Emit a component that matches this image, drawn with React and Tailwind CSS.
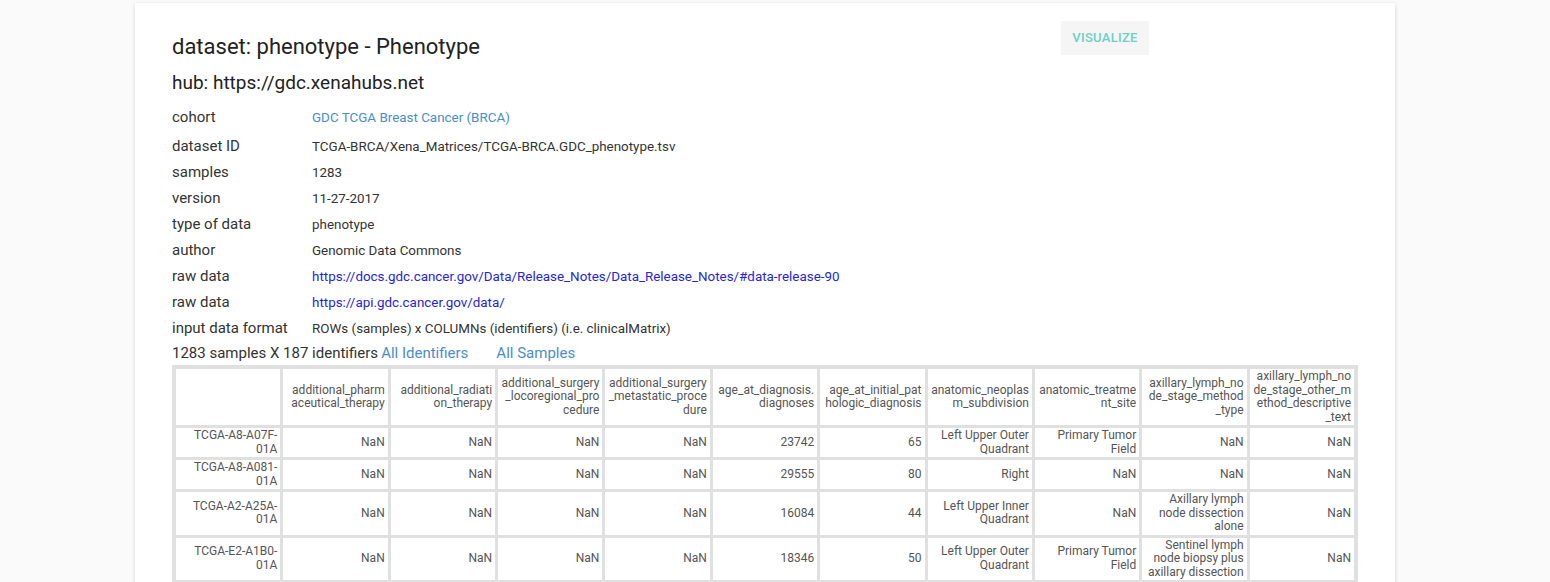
import React from 'react';

const meta = [
  { label: 'dataset ID', value: 'TCGA-BRCA/Xena_Matrices/TCGA-BRCA.GDC_phenotype.tsv' },
  { label: 'samples', value: '1283' },
  { label: 'version', value: '11-27-2017' },
  { label: 'type of data', value: 'phenotype' },
  { label: 'author', value: 'Genomic Data Commons' },
  { label: 'raw data', value: 'https://docs.gdc.cancer.gov/Data/Release_Notes/Data_Release_Notes/#data-release-90', link: true },
  { label: 'raw data', value: 'https://api.gdc.cancer.gov/data/', link: true },
  { label: 'input data format', value: 'ROWs (samples) x COLUMNs (identifiers) (i.e. clinicalMatrix)' },
];

const columns = [
  '',
  'additional_pharmaceutical_therapy',
  'additional_radiation_therapy',
  'additional_surgery_locoregional_procedure',
  'additional_surgery_metastatic_procedure',
  'age_at_diagnosis.diagnoses',
  'age_at_initial_pathologic_diagnosis',
  'anatomic_neoplasm_subdivision',
  'anatomic_treatment_site',
  'axillary_lymph_node_stage_method_type',
  'axillary_lymph_node_stage_other_method_descriptive_text',
];

const rows = [
  ['TCGA-A8-A07F-01A', 'NaN', 'NaN', 'NaN', 'NaN', '23742', '65', 'Left Upper Outer Quadrant', 'Primary Tumor Field', 'NaN', 'NaN'],
  ['TCGA-A8-A081-01A', 'NaN', 'NaN', 'NaN', 'NaN', '29555', '80', 'Right', 'NaN', 'NaN', 'NaN'],
  ['TCGA-A2-A25A-01A', 'NaN', 'NaN', 'NaN', 'NaN', '16084', '44', 'Left Upper Inner Quadrant', 'NaN', 'Axillary lymph node dissection alone', 'NaN'],
  ['TCGA-E2-A1B0-01A', 'NaN', 'NaN', 'NaN', 'NaN', '18346', '50', 'Left Upper Outer Quadrant', 'Primary Tumor Field', 'Sentinel lymph node biopsy plus axillary dissection', 'NaN'],
];

const cell = 'bg-white text-right align-middle px-[3px] py-px leading-[13.5px] [overflow-wrap:anywhere]';

export default function App() {
  return (
    <div className="min-h-screen bg-[#fafafa] pt-[3px] font-['Roboto',_'Liberation_Sans',_sans-serif]">
      <div className="ml-[135px] w-[1260px] bg-white px-[37px] pt-[18px] pb-6 shadow-[0_1px_4px_rgba(0,0,0,0.15)]">
        {/* Header */}
        <div className="flex w-[977px] items-start">
          <div className="flex-1">
            <h1 className="mt-[12px] text-[22px] leading-[28px] text-[#222]">dataset: phenotype - Phenotype</h1>
            <h2 className="mt-[9px] text-[19px] leading-[26px] text-[#222]">hub: https://gdc.xenahubs.net</h2>
          </div>
          <button className="h-[34px] w-[88px] bg-[#f5f5f5] text-[13px] font-medium uppercase tracking-[0.3px] text-[#6cd0c6]">
            Visualize
          </button>
        </div>

        {/* Metadata */}
        <div className="mt-[8px] text-[#333]">
          <div className="flex h-[26px] items-baseline leading-[26px]">
            <span className="w-[140px] text-[15px]">cohort</span>
            <a className="text-[13.4px] text-[#4a8dcc]">GDC TCGA Breast Cancer (BRCA)</a>
          </div>
          <div className="mt-[3px]">
            {meta.map((m, i) => (
              <div key={i} className="flex h-[26px] items-baseline leading-[26px]">
                <span className="w-[140px] text-[15px]">{m.label}</span>
                {m.link ? (
                  <a className="text-[13.4px] text-[#2424e0]">{m.value}</a>
                ) : (
                  <span className="text-[13.4px]">{m.value}</span>
                )}
              </div>
            ))}
          </div>
          <div className="flex h-[24px] items-baseline text-[15px] leading-[24px]">
            <span>1283 samples X 187 identifiers</span>
            <a className="ml-[3px] text-[#4a8dcc]">All Identifiers</a>
            <a className="ml-[28px] text-[#4a8dcc]">All Samples</a>
          </div>
        </div>

        {/* Table */}
        <table className="mt-0 w-[1186px] table-fixed border-separate border-spacing-[3px] border border-[#e0e0e0] bg-[#e0e0e0] text-[12px] text-[#555]">
          <thead>
            <tr>
              {columns.map((c, i) => (
                <th key={i} className={`${cell} font-normal`}>{c}</th>
              ))}
            </tr>
          </thead>
          <tbody>
            {rows.map((r, i) => (
              <tr key={i}>
                {r.map((v, j) => (
                  <td key={j} className={cell}>{v}</td>
                ))}
              </tr>
            ))}
          </tbody>
        </table>
      </div>
    </div>
  );
}
